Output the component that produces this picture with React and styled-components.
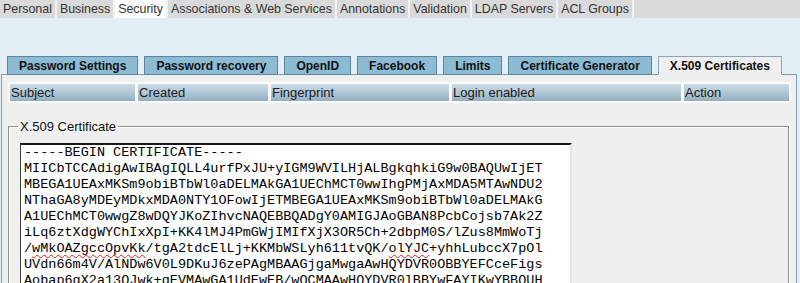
import React from 'react';
import styled, { createGlobalStyle } from 'styled-components';

const GlobalStyle = createGlobalStyle`
  body {
    margin: 0;
    background-color: #e4eff5;
    font-family: "Liberation Sans", Arial, sans-serif;
  }
`;

const Page = styled.div`
  width: 800px;
  height: 283px;
  overflow: hidden;
  background-color: #e4eff5;
`;

const TopBar = styled.div`
  display: flex;
  height: 18px;
  background-color: #dadada;
`;

const TopTab = styled.div`
  padding: 0 3px;
  line-height: 18px;
  font-size: 12.4px;
  color: #333;
  border-right: 2px solid #f2f2f2;
  background-color: ${(p) => (p.active ? '#ffffff' : '#dadada')};
`;

const SubTabs = styled.div`
  display: flex;
  gap: 6px;
  padding: 38px 0 0 7px;
  position: relative;
  z-index: 1;
`;

const SubTab = styled.div`
  height: 19px;
  line-height: 19px;
  padding: 0 11px;
  font-size: 12px;
  font-weight: bold;
  color: #111;
  box-sizing: border-box;
  border: 1px solid ${(p) => (p.active ? '#8aa3b6' : '#5b84a0')};
  border-bottom: ${(p) => (p.active ? '1px solid #efefef' : '1px solid #5b84a0')};
  background-color: ${(p) => (p.active ? '#efefef' : '#8dbbd4')};
  margin-bottom: -1px;
`;

const Panel = styled.div`
  margin: 0 3px 0 1px;
  height: 220px;
  border: 1px solid #7f9db5;
  background-color: #efefef;
`;

const HeaderRow = styled.div`
  display: grid;
  grid-template-columns: 125px 130px 178px 229px 1fr;
  gap: 3px;
  padding: 2px;
  margin: 7px 5px 0 6px;
  background-color: #fbfbfb;
`;

const HeaderCell = styled.div`
  height: 17px;
  line-height: 18px;
  padding-left: 1px;
  font-size: 13px;
  color: #1a1a1a;
  background: linear-gradient(to bottom, #cddbe5 0%, #b2c7d5 50%, #93afc1 100%);
`;

const Fieldset = styled.fieldset`
  margin: 16px 7px 0 6px;
  padding: 9px 0 0 11px;
  border: 1px solid #8c8c8c;
  box-shadow: inset 1px 1px 0 #ffffff, 1px 1px 0 #ffffff;
`;

const Legend = styled.legend`
  margin-left: -2px;
  padding: 0 2px;
  font-size: 13px;
  line-height: 15px;
  color: #111;
`;

const CertBox = styled.div`
  width: 552px;
  height: 160px;
  box-sizing: border-box;
  padding: 0 0 0 3px;
  background-color: #fff;
  border-top: 2px solid #1a1a1a;
  border-left: 1px solid #404040;
  border-right: 2px solid #e4e4e4;
  font-family: "Liberation Mono", "Courier New", monospace;
  font-size: 13.5px;
  line-height: 16px;
  color: #000;
  white-space: pre;
  overflow: hidden;
`;

const Misspelled = styled.span`
  text-decoration: underline wavy #e02020;
  text-decoration-thickness: 1px;
  text-underline-offset: 2px;
  text-decoration-skip-ink: none;
`;

const topTabs = [
  'Personal',
  'Business',
  'Security',
  'Associations & Web Services',
  'Annotations',
  'Validation',
  'LDAP Servers',
  'ACL Groups',
];

const subTabs = [
  'Password Settings',
  'Password recovery',
  'OpenID',
  'Facebook',
  'Limits',
  'Certificate Generator',
  'X.509 Certificates',
];

const columns = ['Subject', 'Created', 'Fingerprint', 'Login enabled', 'Action'];

const App = () => {
  return (
    <Page>
      <GlobalStyle />
      <TopBar>
        {topTabs.map((t) => (
          <TopTab key={t} active={t === 'Security'}>
            {t}
          </TopTab>
        ))}
      </TopBar>
      <SubTabs>
        {subTabs.map((t) => (
          <SubTab key={t} active={t === 'X.509 Certificates'}>
            {t}
          </SubTab>
        ))}
      </SubTabs>
      <Panel>
        <HeaderRow>
          {columns.map((c) => (
            <HeaderCell key={c}>{c}</HeaderCell>
          ))}
        </HeaderRow>
        <Fieldset>
          <Legend>X.509 Certificate</Legend>
          <CertBox>
            {'-----BEGIN CERTIFICATE-----\n'}
            {'MIICbTCCAdigAwIBAgIQLL4urfPxJU+yIGM9WVILHjALBgkqhkiG9w0BAQUwIjET\n'}
            {'MBEGA1UEAxMKSm9obiBTbWl0aDELMAkGA1UEChMCT0wwIhgPMjAxMDA5MTAwNDU2\n'}
            {'NThaGA8yMDEyMDkxMDA0NTY1OFowIjETMBEGA1UEAxMKSm9obiBTbWl0aDELMAkG\n'}
            {'A1UEChMCT0wwgZ8wDQYJKoZIhvcNAQEBBQADgY0AMIGJAoGBAN8PcbCojsb7Ak2Z\n'}
            {'iLq6ztXdgWYChIxXpI+KK4lMJ4PmGWjIMIfXjX3OR5Ch+2dbpM0S/lZus8MmWoTj\n'}
            {'/'}<Misspelled>wMkOAZgccOpvKk</Misspelled>{'/tgA2tdcElLj+KKMbWSLyh611tvQK/'}
            <Misspelled>olYJC</Misspelled>{'+yhhLubccX7pOl\n'}
            {'UVdn66m4V/AlNDw6V0L9DKuJ6zePAgMBAAGjgaMwgaAwHQYDVR0OBBYEFCceFigs\n'}
            {'Aobap6gX2a13QJwk+qEVMAwGA1UdEwEB/wQCMAAwHQYDVR0lBBYwFAYIKwYBBQUH\n'}
          </CertBox>
        </Fieldset>
      </Panel>
    </Page>
  );
};

export default App;
